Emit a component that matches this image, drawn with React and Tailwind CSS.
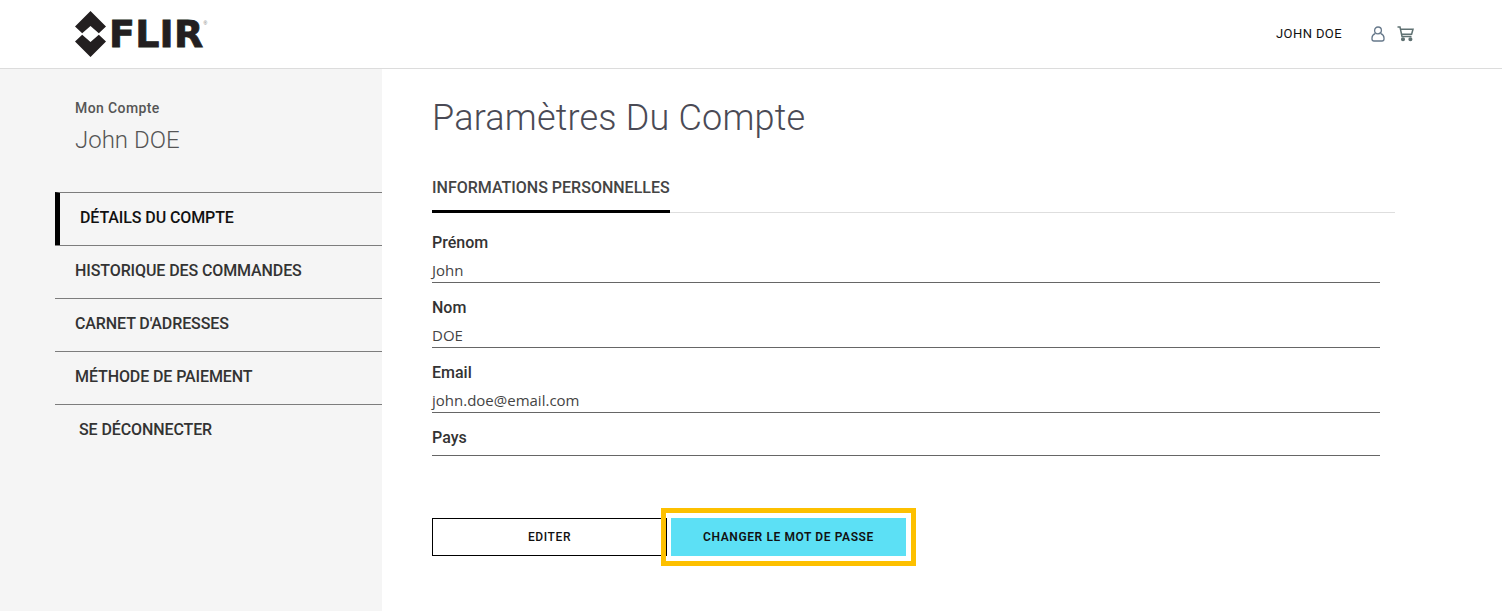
const font = "font-['Roboto',sans-serif]";

function FlirLogo() {
  return (
    <div className="flex items-center">
      <svg width="33" height="46" viewBox="0 0 33 46" className="mr-[2px]" aria-hidden>
        <path d="M16.5 0 L32 15.5 L24.8 22.2 L16.5 15 L8.2 22.2 L1 15.5 Z" fill="#231f20" />
        <path d="M16.5 46 L32 30.5 L24.8 23.8 L16.5 31 L8.2 23.8 L1 30.5 Z" fill="#231f20" />
      </svg>
      <div className="flex items-start">
        <span className="font-['DejaVu_Sans',sans-serif] text-[38px] leading-none font-bold tracking-[0.2px] text-[#231f20] [-webkit-text-stroke:0.8px_#231f20]">
          FLIR
        </span>
        <span className="mt-[6px] font-['Liberation_Sans',sans-serif] text-[5px] leading-none text-[#777]">®</span>
      </div>
    </div>
  );
}

function UserIcon() {
  return (
    <svg width="14" height="16" viewBox="0 0 14 16" fill="none" stroke="#66788a" strokeWidth="1.3" aria-hidden>
      <circle cx="7" cy="4.4" r="3.4" />
      <path d="M4.2 7.6 C2.2 8.4 1 10 1 12 V13 C1 14.2 1.8 15 3 15 H11 C12.2 15 13 14.2 13 13 V12 C13 10 11.8 8.4 9.8 7.6" />
    </svg>
  );
}

function CartIcon() {
  return (
    <svg width="17" height="16" viewBox="0 0 17 16" fill="none" stroke="#5f7172" strokeWidth="1.5" aria-hidden>
      <path d="M0.5 1 H3 L5 10.5 H14.5" />
      <path d="M3.5 3.2 H16 L14.6 8.2 H4.6" />
      <circle cx="6" cy="13.3" r="1.3" fill="#5f7172" />
      <circle cx="13.4" cy="13.3" r="1.3" fill="#5f7172" />
    </svg>
  );
}

function SideItem({ label, active, pad = "pl-5" }) {
  return (
    <div
      className={`flex h-[53px] items-center border-t border-[#7d7d7d] pb-[2px] text-[16px] font-medium tracking-[-0.1px] ${pad} ${
        active ? "border-l-[5px] border-l-black text-[#111]" : "text-[#333]"
      }`}
    >
      {label}
    </div>
  );
}

function Field({ label, value, className = "" }) {
  return (
    <div className={`w-[948px] border-b border-[#666] ${className}`}>
      <div className="h-[25px] text-[16px] leading-[25px] font-medium text-[#333]">{label}</div>
      {value && (
        <div className="mt-[3px] h-[25px] font-['Open_Sans',sans-serif] text-[15px] leading-[25px] text-[#444]">
          {value}
        </div>
      )}
    </div>
  );
}

export default function App() {
  return (
    <div className={`flex min-h-screen flex-col bg-white ${font}`}>
      <header className="flex h-[69px] items-center justify-between border-b border-[#dcdcdc] pr-[88px] pl-[74px]">
        <FlirLogo />
        <div className="flex items-center">
          <span className="mr-[29px] text-[13px] tracking-[0.4px] text-[#111]">JOHN DOE</span>
          <UserIcon />
          <span className="ml-[12px]">
            <CartIcon />
          </span>
        </div>
      </header>

      <div className="flex flex-1">
        <aside className="w-[382px] bg-[#f5f5f5] pt-[30px] pb-[46px] pl-[55px]">
          <div className="pl-5">
            <div className="text-[14px] leading-[18px] font-medium tracking-[0.4px] text-[#555]">Mon Compte</div>
            <div className="mt-[7px] text-[24px] leading-[32px] font-light text-[#555]">John DOE</div>
          </div>
          <nav className="mt-[36px]">
            <SideItem label="DÉTAILS DU COMPTE" active />
            <SideItem label="HISTORIQUE DES COMMANDES" />
            <SideItem label="CARNET D'ADRESSES" />
            <SideItem label="MÉTHODE DE PAIEMENT" />
            <SideItem label="SE DÉCONNECTER" pad="pl-6" />
          </nav>
        </aside>

        <main className="flex-1 pt-[26px] pl-[50px]">
          <h1 className="h-[46px] text-[36px] leading-[46px] font-light tracking-[0.2px] text-[#4a4a55]">
            Paramètres Du Compte
          </h1>
          <div className="mt-[25px] mr-[107px] flex h-[47px] border-b border-[#dedede]">
            <div className="h-[47px] border-b-[3px] border-black pt-[10px] text-[16px] leading-[24px] font-medium text-[#444]">
              INFORMATIONS PERSONNELLES
            </div>
          </div>
          <Field label="Prénom" value="John" className="mt-[17px] h-[53px]" />
          <Field label="Nom" value="DOE" className="mt-[12px] h-[53px]" />
          <Field label="Email" value="john.doe@email.com" className="mt-[12px] h-[53px]" />
          <Field label="Pays" className="mt-[12px] h-[31px]" />

          <div className="mt-[62px] flex">
            <button className="h-[38px] w-[235px] border border-black bg-white text-[12px] font-medium tracking-[0.6px] text-[#111]">
              EDITER
            </button>
            <div className="relative ml-1">
              <button className="h-[38px] w-[235px] bg-[#5ce0f5] text-[12px] font-semibold tracking-[0.6px] text-[#111]">
                CHANGER LE MOT DE PASSE
              </button>
              <div className="absolute -inset-[10px] border-[5px] border-[#fdc000]" />
            </div>
          </div>
        </main>
      </div>
    </div>
  );
}
